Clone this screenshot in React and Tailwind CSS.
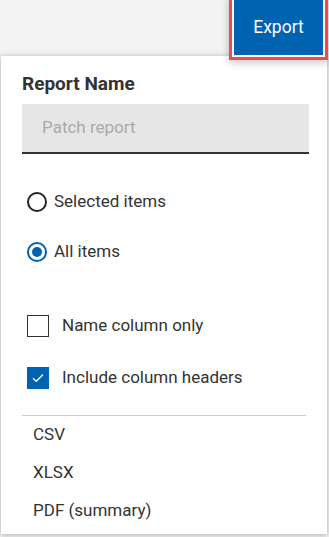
import React, { useState } from "react";

const formats = ["CSV", "XLSX", "PDF (summary)"];

const App = () => {
  const [scope, setScope] = useState("all");
  const [nameOnly, setNameOnly] = useState(false);
  const [headers, setHeaders] = useState(true);

  return (
    <div
      className="relative h-[537px] w-[329px] overflow-hidden bg-[#f3f3f3] text-[#333]"
      style={{ fontFamily: "Roboto, 'Liberation Sans', sans-serif" }}
    >
      <div className="flex h-[56px] justify-end">
        <button className="relative z-10 mr-[6px] h-[55px] w-[89px] bg-[#0063b1] text-[17.5px] text-white shadow-[0_0_0_2px_#fff,0_0_0_5px_#f04a4a,0_2px_8px_5px_rgba(0,0,0,0.25)]">
          Export
        </button>
      </div>

      <div className="ml-[1px] h-[478px] w-[326px] bg-white shadow-[0_1px_6px_rgba(0,0,0,0.3)]">
        <div className="px-[21px] pt-[17px]">
          <h2 className="text-[19px] font-bold leading-[22px] text-[#333]">
            Report Name
          </h2>
          <div className="mt-[9px] flex h-[50px] w-[287px] items-center border-b-2 border-[#333] bg-[#e6e6e6] px-[20px] text-[17px] text-[#aaa]">
            Patch report
          </div>

          <div className="mt-[38px] flex flex-col gap-[30px] pl-[5px]">
            {[
              ["selected", "Selected items"],
              ["all", "All items"],
            ].map(([key, label]) => (
              <label
                key={key}
                onClick={() => setScope(key)}
                className="flex h-[20px] cursor-pointer items-center gap-[7px] text-[17px]"
              >
                {scope === key ? (
                  <span className="flex h-[20px] w-[20px] items-center justify-center rounded-full border-2 border-[#0063b1]">
                    <span className="h-[10px] w-[10px] rounded-full bg-[#0063b1]" />
                  </span>
                ) : (
                  <span className="h-[20px] w-[20px] rounded-full border-2 border-[#222]" />
                )}
                {label}
              </label>
            ))}
          </div>

          <div className="mt-[53px] flex flex-col gap-[30px] pl-[5px]">
            {[
              [nameOnly, setNameOnly, "Name column only"],
              [headers, setHeaders, "Include column headers"],
            ].map(([checked, set, label]) => (
              <label
                key={label}
                onClick={() => set(!checked)}
                className="flex h-[22px] cursor-pointer items-center gap-[13px] text-[17px]"
              >
                {checked ? (
                  <span className="flex h-[22px] w-[22px] items-center justify-center bg-[#0063b1]">
                    <svg width="12" height="10" viewBox="0 0 12 10" fill="none">
                      <path d="M1 5.2 L4.3 8.3 L11 1.5" stroke="#fff" strokeWidth="1.3" />
                    </svg>
                  </span>
                ) : (
                  <span className="h-[22px] w-[22px] border-[1.5px] border-[#333]" />
                )}
                {label}
              </label>
            ))}
          </div>

          <div className="mt-[26px] border-t border-[#ccc]" />
          <ul>
            {formats.map((f) => (
              <li
                key={f}
                className="flex h-[38px] cursor-pointer items-center pl-[11px] text-[17px]"
              >
                {f}
              </li>
            ))}
          </ul>
        </div>
      </div>
    </div>
  );
};

export default App;
